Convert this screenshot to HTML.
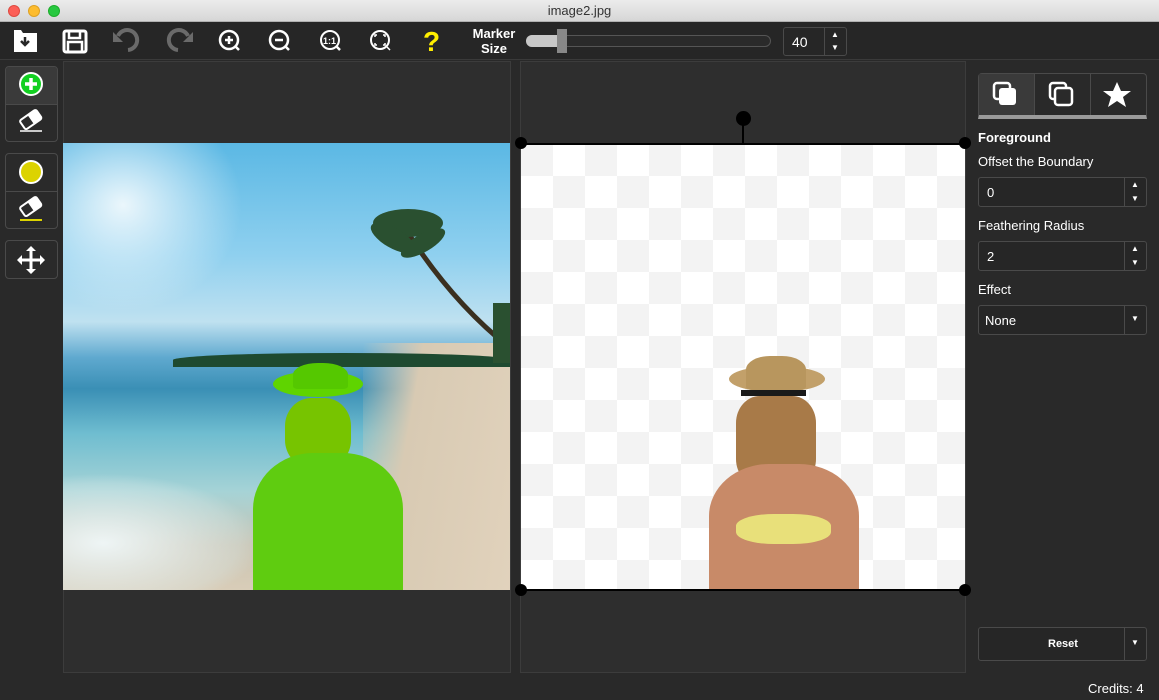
<!DOCTYPE html>
<html><head><style>
*{margin:0;padding:0;box-sizing:border-box}
body{width:1159px;height:700px;background:#292929;font-family:"Liberation Sans",sans-serif;position:relative;overflow:hidden;color:#fff}
.abs{position:absolute}
.title{left:0;top:0;width:1159px;height:22px;background:linear-gradient(#ececec,#d6d6d6);border-bottom:1px solid #b0b0b0;text-align:center;font-size:13px;color:#333;line-height:22px}
.dot{width:12px;height:12px;border-radius:50%;top:5px}
.tb{left:0;top:22px;width:1159px;height:38px;background:#262626;border-bottom:1px solid #3a3a3a}
.panel{background:#2e2e2e}
.btngrp{border:1px solid #4a4a4a;border-radius:4px;background:#2a2a2a}
.lbl{font-size:13px;color:#fff}
.inp{border:1px solid #4a4a4a;border-radius:3px;background:#262626;font-size:13px}
</style></head><body>
<div class="abs title">image2.jpg</div>
<div class="abs dot" style="left:8px;background:#fc5f57;border:1px solid #de4a41"></div>
<div class="abs dot" style="left:28px;background:#fdbc2e;border:1px solid #dea123"></div>
<div class="abs dot" style="left:48px;background:#28c840;border:1px solid #1dad2b"></div>
<div class="abs tb"></div>
<svg class="abs" style="left:0;top:22px" width="460" height="38" fill="none" stroke="#fff" stroke-width="2.5">
<path d="M14 8h7l2 3h14v19h-23z" fill="#fff" stroke="none"/><path d="M25 15v8M21 19l4 4 4-4" stroke="#262626" stroke-width="2.5"/>
<rect x="64" y="9" width="22" height="21" rx="2" stroke-width="3"/><rect x="69" y="9" width="11" height="7"/><rect x="68" y="20" width="14" height="10"/>
<path d="M118 14a10 10 0 1 1 10 14" stroke="#6a6a6a" stroke-width="4"/><path d="M113 10v10h10z" fill="#6a6a6a" stroke="none"/>
<path d="M188 14a10 10 0 1 0 -10 14" stroke="#6a6a6a" stroke-width="4"/><path d="M193 10v10h-10z" fill="#6a6a6a" stroke="none"/>
<circle cx="229" cy="18" r="9"/><path d="M235 24l4 4M225 18h8M229 14v8"/>
<circle cx="279" cy="18" r="9"/><path d="M285 24l4 4M275 18h8"/>
<circle cx="330" cy="18" r="9" stroke-width="2"/><path d="M336 24l4 4"/>
<text x="323" y="22" fill="#fff" stroke="none" font-size="9" font-weight="bold" font-family="Liberation Sans">1:1</text>
<circle cx="380" cy="18" r="9" stroke-width="2"/><path d="M386 24l4 4M375 15v-2h2M383 13h2v2M385 21v2h-2M377 23h-2v-2" stroke-width="1.5"/>
<text x="423" y="29" fill="#ffee00" stroke="none" font-size="28" font-weight="bold" font-family="Liberation Sans">?</text>
</svg>
<div class="abs" style="left:468px;top:26px;width:52px;font-size:13px;font-weight:bold;text-align:center;line-height:15px">Marker<br>Size</div>
<div class="abs" style="left:526px;top:35px;width:245px;height:12px;border:1px solid #555;border-radius:6px;background:#2a2a2a"></div>
<div class="abs" style="left:526px;top:35px;width:35px;height:12px;border-radius:6px 0 0 6px;background:#c8c8c8"></div>
<div class="abs" style="left:557px;top:29px;width:10px;height:24px;background:#888"></div>
<div class="abs inp" style="left:783px;top:27px;width:64px;height:29px;"><span style="position:absolute;left:8px;top:6px;font-size:14px">40</span><div style="position:absolute;left:40px;top:0;width:1px;height:27px;background:#4a4a4a"></div><span style="position:absolute;left:47px;top:2px;font-size:8px">▲</span><span style="position:absolute;left:47px;top:15px;font-size:8px">▼</span></div>
<div class="abs btngrp" style="left:5px;top:66px;width:53px;height:76px;overflow:hidden"><div style="height:38px;background:#3a3a3a;border-bottom:1px solid #4a4a4a"></div></div>
<div class="abs btngrp" style="left:5px;top:153px;width:53px;height:76px"><div style="height:38px;border-bottom:1px solid #4a4a4a"></div></div>
<div class="abs btngrp" style="left:5px;top:240px;width:53px;height:39px"></div>
<svg class="abs" style="left:0;top:60px" width="63" height="230">
<circle cx="31" cy="24" r="11" fill="#12d021" stroke="#fff" stroke-width="2"/><path d="M31 18v12M25 24h12" stroke="#fff" stroke-width="3.5"/>
<g transform="translate(31 60) rotate(-35)"><rect x="-10" y="-6" width="20" height="11" rx="2" fill="none" stroke="#fff" stroke-width="2"/><rect x="0" y="-6" width="10" height="11" rx="1" fill="#fff"/></g><path d="M20 71h22" stroke="#fff" stroke-width="1.5"/>
<circle cx="31" cy="112" r="11" fill="#dcd300" stroke="#fff" stroke-width="2"/>
<g transform="translate(31 147) rotate(-35)"><rect x="-10" y="-6" width="20" height="11" rx="2" fill="none" stroke="#fff" stroke-width="2"/><rect x="0" y="-6" width="10" height="11" rx="1" fill="#fff"/></g><path d="M20 160h22" stroke="#dcd300" stroke-width="2"/>
<path d="M31 189v22M20 200h22" stroke="#fff" stroke-width="3"/><path d="M31 186l-5 5h10zM31 214l-5-5h10zM17 200l5-5v10zM45 200l-5-5v10z" fill="#fff"/>
</svg>
<div class="abs panel" style="left:63px;top:61px;width:448px;height:612px;border:1px solid #3c3c3c"></div>
<div class="abs panel" style="left:520px;top:61px;width:446px;height:612px;border:1px solid #3c3c3c"></div>
<div class="abs" style="left:63px;top:143px;width:447px;height:447px;overflow:hidden;background:linear-gradient(180deg,#5bb8e4 0%,#8fd0ef 25%,#bfe1f0 40%,#5fa9cf 48%,#3a8fb5 55%,#6fbdd0 65%,#a6d3d6 78%,#c9c4b3 90%,#d9cdb8 100%)">
<div style="position:absolute;left:-20px;top:-10px;width:200px;height:180px;background:radial-gradient(ellipse at 40% 40%,rgba(255,255,255,.85),rgba(255,255,255,0) 70%)"></div>
<div style="position:absolute;left:300px;top:200px;width:160px;height:247px;background:linear-gradient(100deg,rgba(0,0,0,0),#d8cab3 30%,#e2d3bd)"></div>
<div style="position:absolute;left:110px;top:210px;width:340px;height:14px;background:#1e4a30;border-radius:50% 50% 0 0"></div>
<svg style="position:absolute;left:300px;top:40px" width="147" height="180"><path d="M45 50 Q90 120 147 165" stroke="#3a3020" stroke-width="5" fill="none"/><g fill="#2a5030"><ellipse cx="45" cy="40" rx="35" ry="14"/><ellipse cx="30" cy="55" rx="25" ry="10" transform="rotate(30 30 55)"/><ellipse cx="60" cy="60" rx="25" ry="9" transform="rotate(-30 60 60)"/><rect x="130" y="120" width="17" height="60"/></g></svg>
<div style="position:absolute;left:0;top:330px;width:200px;height:117px;background:radial-gradient(ellipse at 20% 60%,#eef5f5,rgba(220,235,235,.3) 60%,rgba(0,0,0,0) 70%)"></div>
<div style="position:absolute;left:210px;top:228px;width:90px;height:26px;border-radius:50%;background:#5fd400"></div>
<div style="position:absolute;left:230px;top:220px;width:55px;height:26px;border-radius:45% 45% 10% 10%;background:#55c800"></div>
<div style="position:absolute;left:222px;top:255px;width:66px;height:70px;border-radius:40%;background:#77c400"></div>
<div style="position:absolute;left:190px;top:310px;width:150px;height:140px;border-radius:40% 40% 0 0;background:#5fcc10"></div>
</div>
<div class="abs" style="left:521px;top:144px;width:444px;height:446px;background-color:#fff;background-image:linear-gradient(45deg,#f3f3f3 25%,transparent 25%,transparent 75%,#f3f3f3 75%),linear-gradient(45deg,#f3f3f3 25%,transparent 25%,transparent 75%,#f3f3f3 75%);background-size:64px 64px;background-position:32px 0,0 32px;overflow:hidden">
<div style="position:absolute;left:208px;top:222px;width:96px;height:26px;border-radius:50%;background:#c2a06a"></div>
<div style="position:absolute;left:225px;top:212px;width:60px;height:34px;border-radius:40% 40% 10% 10%;background:#b8965e"></div>
<div style="position:absolute;left:220px;top:246px;width:65px;height:6px;background:#1a1a1a"></div>
<div style="position:absolute;left:215px;top:252px;width:80px;height:90px;border-radius:30%;background:#a87a48"></div>
<div style="position:absolute;left:188px;top:320px;width:150px;height:130px;border-radius:40% 40% 0 0;background:#c88a68"></div>
<div style="position:absolute;left:215px;top:370px;width:95px;height:30px;background:#e8e07a;border-radius:40%"></div>
</div>
<div class="abs" style="left:521px;top:143px;width:444px;height:2px;background:#000"></div>
<div class="abs" style="left:521px;top:589px;width:444px;height:2px;background:#000"></div>
<div class="abs" style="left:742px;top:118px;width:2px;height:26px;background:#000"></div>
<div class="abs" style="left:736px;top:111px;width:15px;height:15px;border-radius:50%;background:#000"></div>
<div class="abs" style="left:515px;top:137px;width:12px;height:12px;border-radius:50%;background:#000"></div>
<div class="abs" style="left:959px;top:137px;width:12px;height:12px;border-radius:50%;background:#000"></div>
<div class="abs" style="left:515px;top:584px;width:12px;height:12px;border-radius:50%;background:#000"></div>
<div class="abs" style="left:959px;top:584px;width:12px;height:12px;border-radius:50%;background:#000"></div>
<div class="abs" style="left:978px;top:73px;width:169px;height:46px;border:1px solid #4a4a4a;border-radius:4px 4px 0 0;border-bottom:4px solid #9a9a9a;display:flex">
<div style="flex:1;background:#3a3a3a;border-right:1px solid #4a4a4a"></div><div style="flex:1;border-right:1px solid #4a4a4a"></div><div style="flex:1"></div></div>
<svg class="abs" style="left:978px;top:73px" width="169" height="44">
<rect x="16" y="10" width="16" height="16" rx="3" fill="none" stroke="#fff" stroke-width="2.5"/><rect x="21" y="15" width="17" height="17" rx="3" fill="#fff"/>
<rect x="72" y="10" width="16" height="16" rx="3" fill="none" stroke="#fff" stroke-width="2.5"/><rect x="77" y="15" width="17" height="17" rx="3" fill="#2a2a2a" stroke="#fff" stroke-width="2.5"/>
<path d="M139 9l4 9h10l-8 6 3 10-9-6-9 6 3-10-8-6h10z" fill="#fff"/>
</svg>
<div class="abs lbl" style="left:978px;top:130px;font-weight:bold">Foreground</div>
<div class="abs lbl" style="left:978px;top:154px">Offset the Boundary</div>
<div class="abs inp" style="left:978px;top:177px;width:169px;height:30px"><span style="position:absolute;left:8px;top:7px">0</span><div style="position:absolute;left:145px;top:0;width:1px;height:28px;background:#4a4a4a"></div><span style="position:absolute;left:152px;top:2px;font-size:8px">▲</span><span style="position:absolute;left:152px;top:16px;font-size:8px">▼</span></div>
<div class="abs lbl" style="left:978px;top:218px">Feathering Radius</div>
<div class="abs inp" style="left:978px;top:241px;width:169px;height:30px"><span style="position:absolute;left:8px;top:7px">2</span><div style="position:absolute;left:145px;top:0;width:1px;height:28px;background:#4a4a4a"></div><span style="position:absolute;left:152px;top:2px;font-size:8px">▲</span><span style="position:absolute;left:152px;top:16px;font-size:8px">▼</span></div>
<div class="abs lbl" style="left:978px;top:282px">Effect</div>
<div class="abs inp" style="left:978px;top:305px;width:169px;height:30px"><span style="position:absolute;left:6px;top:7px">None</span><div style="position:absolute;left:145px;top:0;width:1px;height:28px;background:#4a4a4a"></div><span style="position:absolute;left:152px;top:8px;font-size:8px">▼</span></div>
<div class="abs inp" style="left:978px;top:627px;width:169px;height:34px"><span style="position:absolute;left:69px;top:10px;font-size:11px;font-weight:bold">Reset</span><div style="position:absolute;left:145px;top:0;width:1px;height:32px;background:#4a4a4a"></div><span style="position:absolute;left:152px;top:10px;font-size:8px">▼</span></div>
<div class="abs lbl" style="left:1088px;top:681px">Credits: 4</div>
</body></html>
